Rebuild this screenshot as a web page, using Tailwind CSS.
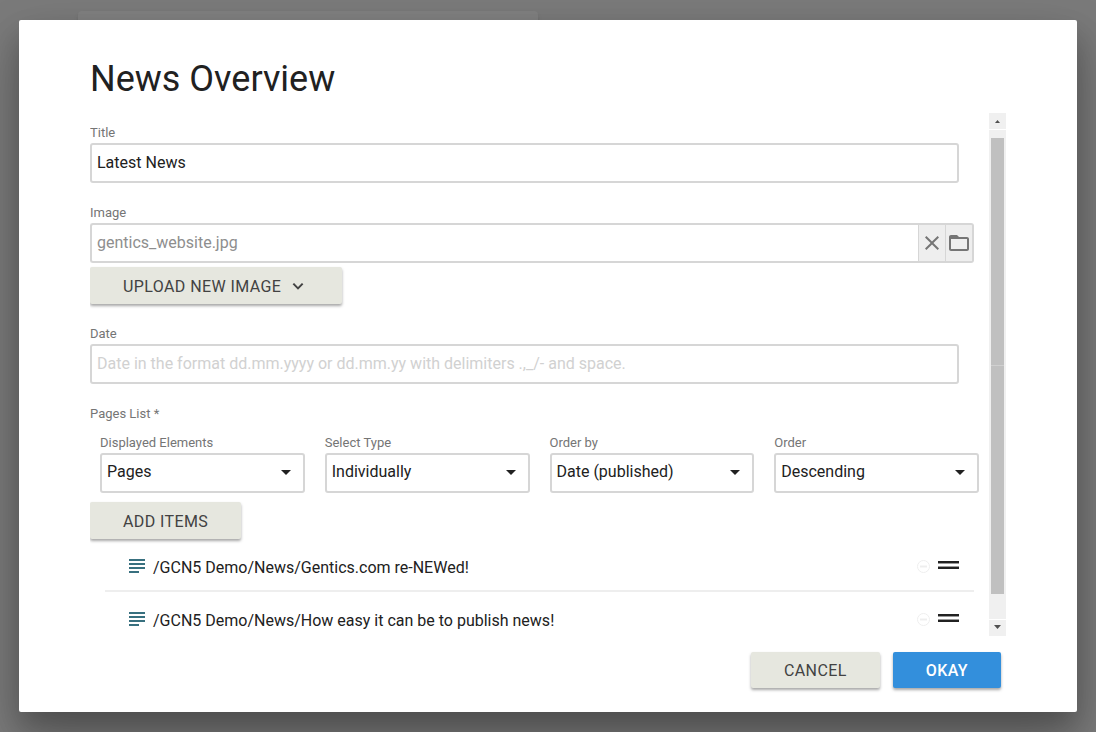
<!DOCTYPE html>
<html lang="en">
<head>
<meta charset="utf-8">
<meta name="viewport" content="width=device-width, initial-scale=1">
<title>News Overview</title>
<script src="https://cdn.jsdelivr.net/npm/@tailwindcss/browser@4"></script>
</head>
<body class="relative flex min-h-screen items-start overflow-hidden bg-[#7a7a7a] px-[19px] py-5 font-['Roboto',sans-serif] text-base text-[#212121]">
<!-- Panel behind the dialog -->
<div class="absolute top-[11px] left-[78px] h-40 w-[460px] rounded-sm bg-[#808080] shadow-md"></div>

<main role="dialog" aria-labelledby="heading" class="relative flex min-w-0 flex-1 flex-col rounded-xs bg-white px-[71px] pt-8 pb-6 shadow-[0_16px_28px_0_rgba(0,0,0,0.22),0_25px_55px_0_rgba(0,0,0,0.21)]">
  <h1 id="heading" class="mb-[7px] text-4xl leading-[54px] font-normal tracking-normal">News Overview</h1>

  <div class="flex h-[523px]">
    <form id="news" class="min-w-0 flex-1 overflow-hidden pt-[10px]">
      <div class="mr-[30px] mb-5">
        <label for="title" class="block text-[13px] leading-5 text-[#757575]">Title</label>
        <input id="title" type="text" value="Latest News" class="block h-10 w-full rounded-[3px] border-2 border-[#d6d6d6] px-[5px] pb-[2px]">
      </div>

      <div class="mr-[15px]">
        <label for="image" class="block text-[13px] leading-5 text-[#757575]">Image</label>
        <div class="flex h-10">
          <input id="image" type="text" readonly value="gentics_website.jpg" class="h-10 min-w-0 flex-1 rounded-l-[3px] border-2 border-r-0 border-[#d6d6d6] px-[5px] pb-[2px] text-[#8e8e8e]">
          <button type="button" aria-label="Clear image" class="flex w-7 items-center justify-center border-x border-y-2 border-[#d6d6d6] bg-[#eeeeee] text-[#757575]">
            <svg class="size-6" viewBox="0 0 24 24" fill="currentColor"><path d="M19 6.4 17.6 5 12 10.6 6.4 5 5 6.4 10.6 12 5 17.6 6.4 19 12 13.4 17.6 19 19 17.6 13.4 12z"/></svg>
          </button>
          <button type="button" aria-label="Browse images" class="flex w-7 items-center justify-center rounded-r-[3px] border-y-2 border-r-2 border-[#d6d6d6] bg-[#eeeeee] text-[#757575]">
            <svg class="size-6 shrink-0" viewBox="0 0 24 24" fill="currentColor"><path d="M20 6h-8l-2-2H4c-1.100 0-2 .9-2 2v12c0 1.100.9 2 2 2h16c1.100 0 2-.9 2-2V8c0-1.100-.9-2-2-2zm0 12H4V8h16v10z"/></svg>
          </button>
        </div>
      </div>
      <button type="button" class="mt-1 mb-5 flex h-[37px] items-center gap-[9px] rounded-xs bg-[#e6e7df] pt-[2px] pr-9 pl-[33px] tracking-wide text-[#424242] shadow-[0_2px_3px_0_rgba(0,0,0,0.35)]">UPLOAD NEW IMAGE
        <svg class="size-4" viewBox="0 0 24 24" fill="none" stroke="currentColor" stroke-width="3"><path d="m5 7 7 7 7-7"/></svg>
      </button>

      <div class="mr-[30px] mb-5">
        <label for="date" class="block text-[13px] leading-5 text-[#757575]">Date</label>
        <input id="date" type="text" placeholder="Date in the format dd.mm.yyyy or dd.mm.yy with delimiters .,_/- and space." class="block h-10 w-full rounded-[3px] border-2 border-[#d6d6d6] px-[5px] pb-[2px] placeholder:text-[#d1d1d1]">
      </div>

      <p class="mb-[9px] text-[13px] leading-5 text-[#757575]">Pages List *</p>
      <div class="mr-[10px] mb-[9px] ml-[10px] grid grid-cols-4 gap-5">
        <div>
          <label for="elements" class="block text-[13px] leading-5 text-[#757575]">Displayed Elements</label>
          <div class="relative">
            <select id="elements" class="block h-10 w-full appearance-none rounded-[3px] border-2 border-[#d6d6d6] bg-white px-[5px] pb-[2px]"><option>Pages</option></select>
            <svg class="pointer-events-none absolute top-[17px] right-[14px] h-[5px] w-[10px]" viewBox="0 0 10 5" fill="#212121"><path d="M0 0h10L5 5z"/></svg>
          </div>
        </div>
        <div>
          <label for="type" class="block text-[13px] leading-5 text-[#757575]">Select Type</label>
          <div class="relative">
            <select id="type" class="block h-10 w-full appearance-none rounded-[3px] border-2 border-[#d6d6d6] bg-white px-[5px] pb-[2px]"><option>Individually</option></select>
            <svg class="pointer-events-none absolute top-[17px] right-[14px] h-[5px] w-[10px]" viewBox="0 0 10 5" fill="#212121"><path d="M0 0h10L5 5z"/></svg>
          </div>
        </div>
        <div>
          <label for="orderby" class="block text-[13px] leading-5 text-[#757575]">Order by</label>
          <div class="relative">
            <select id="orderby" class="block h-10 w-full appearance-none rounded-[3px] border-2 border-[#d6d6d6] bg-white px-[5px] pb-[2px]"><option>Date (published)</option></select>
            <svg class="pointer-events-none absolute top-[17px] right-[14px] h-[5px] w-[10px]" viewBox="0 0 10 5" fill="#212121"><path d="M0 0h10L5 5z"/></svg>
          </div>
        </div>
        <div>
          <label for="order" class="block text-[13px] leading-5 text-[#757575]">Order</label>
          <div class="relative">
            <select id="order" class="block h-10 w-full appearance-none rounded-[3px] border-2 border-[#d6d6d6] bg-white px-[5px] pb-[2px]"><option>Descending</option></select>
            <svg class="pointer-events-none absolute top-[17px] right-[14px] h-[5px] w-[10px]" viewBox="0 0 10 5" fill="#212121"><path d="M0 0h10L5 5z"/></svg>
          </div>
        </div>
      </div>
      <button type="button" class="block h-[37px] rounded-xs bg-[#e6e7df] px-[33px] pt-[2px] tracking-wide text-[#424242] shadow-[0_2px_3px_0_rgba(0,0,0,0.35)]">ADD ITEMS</button>

      <ul class="mr-[15px] ml-[15px]">
        <li class="flex h-[53px] items-center border-b-2 border-[#eeeeee] pt-[7px] pr-[15px] pl-6">
          <svg class="mr-2 mb-[5px] h-[14px] w-4" viewBox="0 0 16 14" fill="#38707f"><path d="M0 0h16v2H0zM0 4h16v2H0zM0 8h16v2H0zM0 12h10v2H0z"/></svg>
          <span class="flex-1">/GCN5 Demo/News/Gentics.com re-NEWed!</span>
          <button type="button" aria-label="Remove item" class="mr-2 mb-1"><svg class="size-[13px]" viewBox="0 0 13 13" fill="none" stroke="#eeeeee"><circle cx="6.500" cy="6.500" r="6"/><path d="M3 6.500h7" stroke-width="2"/></svg></button>
          <svg class="mb-[7px] h-2 w-[21px]" viewBox="0 0 21 8"><path d="M0 0h21v2H0zM0 6h21v2H0z" fill="#212121"/><path d="M0 2h21v1H0zM0 5h21v1H0z" fill="#999999"/></svg>
        </li>
        <li class="flex h-[53px] items-center border-b-2 border-[#eeeeee] pt-[7px] pr-[15px] pl-6">
          <svg class="mr-2 mb-[5px] h-[14px] w-4" viewBox="0 0 16 14" fill="#38707f"><path d="M0 0h16v2H0zM0 4h16v2H0zM0 8h16v2H0zM0 12h10v2H0z"/></svg>
          <span class="flex-1">/GCN5 Demo/News/How easy it can be to publish news!</span>
          <button type="button" aria-label="Remove item" class="mr-2 mb-1"><svg class="size-[13px]" viewBox="0 0 13 13" fill="none" stroke="#eeeeee"><circle cx="6.500" cy="6.500" r="6"/><path d="M3 6.500h7" stroke-width="2"/></svg></button>
          <svg class="mb-[7px] h-2 w-[21px]" viewBox="0 0 21 8"><path d="M0 0h21v2H0zM0 6h21v2H0z" fill="#212121"/><path d="M0 2h21v1H0zM0 5h21v1H0z" fill="#999999"/></svg>
        </li>
      </ul>
    </form>

    <!-- Scrollbar -->
    <div aria-hidden="true" class="flex w-[17px] flex-col gap-px">
      <div class="flex h-4 items-center justify-center bg-[#f0f0f0]"><svg class="h-[3px] w-[5px]" viewBox="0 0 5 3" fill="#505050"><path d="M0 3h5L2.500 0z"/></svg></div>
      <div class="flex-1 bg-[#f0f0f0] pt-2 pr-[2px] pb-[25px] pl-[2px]">
        <div class="flex h-full flex-col bg-[#c0c0c0]"><div class="h-1/2 border-b border-[#d0d0d0]"></div></div>
      </div>
      <div class="flex h-4 items-center justify-center bg-[#f0f0f0] pb-[2px]"><svg class="h-1 w-[7px]" viewBox="0 0 7 4" fill="#505050"><path d="M0 0h7L3.500 4z"/></svg></div>
    </div>
  </div>

  <footer class="mt-4 flex justify-end gap-[13px] pr-[5px]">
    <button type="button" class="h-9 rounded-xs bg-[#e6e7df] px-[33px] pt-px tracking-wide text-[#424242] shadow-[0_2px_3px_0_rgba(0,0,0,0.35)]">CANCEL</button>
    <button type="submit" form="news" class="h-9 rounded-xs bg-[#338fdc] px-[33px] pt-px font-medium tracking-wide text-white shadow-[0_2px_3px_0_rgba(0,0,0,0.35)]">OKAY</button>
  </footer>
</main>
</body>
</html>
